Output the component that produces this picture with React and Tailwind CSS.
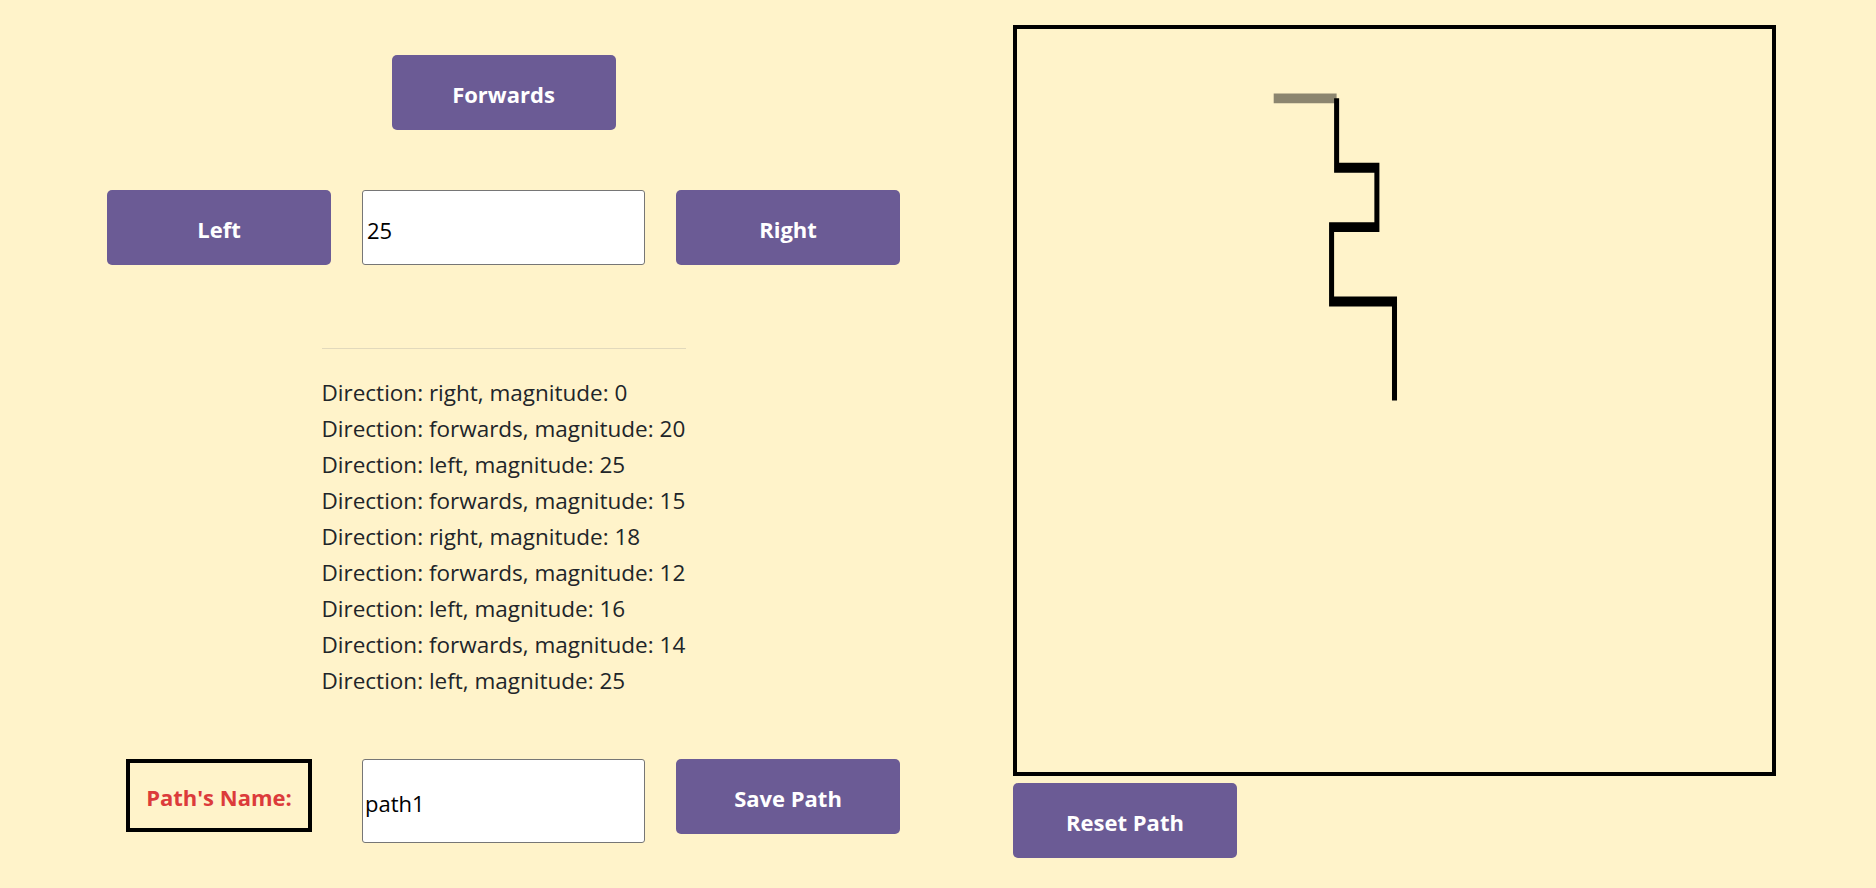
import React from "react";

const moves = [
  ["right", 0],
  ["forwards", 20],
  ["left", 25],
  ["forwards", 15],
  ["right", 18],
  ["forwards", 12],
  ["left", 16],
  ["forwards", 14],
  ["left", 25],
];

function Btn({ children }) {
  return (
    <button className="w-[224px] h-[75px] rounded-[5px] bg-[#6b5b95] text-white font-bold text-[22px] pt-[4px]">
      {children}
    </button>
  );
}

export default function App() {
  return (
    <div
      className="w-[1876px] h-[888px] bg-[#fff3ca] flex text-[#212529]"
      style={{ fontFamily: '"Open Sans", "Noto Sans", sans-serif' }}
    >
      <div className="w-[1007px] flex flex-col items-center">
        <div className="mt-[55px]">
          <Btn>Forwards</Btn>
        </div>
        <div className="mt-[60px] grid grid-cols-[224px_283px_224px] gap-x-[31px] items-center">
          <Btn>Left</Btn>
          <input
            defaultValue="25"
            className="w-[283px] h-[75px] bg-white border border-[#767676] rounded-[3px] px-[4px] pt-[5px] text-[22px] text-black outline-none"
          />
          <Btn>Right</Btn>
        </div>
        <div className="mt-[83px] w-[364px] border-t border-[#e2d9bc]" />
        <div className="mt-[26px] w-[364px] text-[22.5px] leading-[36px]">
          {moves.map(([d, m], i) => (
            <div key={i} className="whitespace-nowrap">
              Direction: {d}, magnitude: {m}
            </div>
          ))}
        </div>
        <div className="mt-[60px] grid grid-cols-[224px_283px_224px] gap-x-[31px] items-start">
          <div className="flex justify-center">
            <div className="w-[186px] h-[73px] border-4 border-black flex items-center justify-center pt-[3px] text-[#dc3b3b] font-bold text-[22px] whitespace-nowrap">
              Path's Name:
            </div>
          </div>
          <input
            defaultValue="path1"
            className="w-[283px] h-[84px] bg-white border border-[#767676] rounded-[3px] px-[2px] pt-[3px] text-[22px] text-black outline-none"
          />
          <Btn>Save Path</Btn>
        </div>
      </div>
      <div className="ml-[6px] pt-[25px] flex flex-col">
        <div className="w-[763px] h-[751px] border-4 border-black">
          <svg
            viewBox="0 0 300 150"
            preserveAspectRatio="none"
            className="w-full h-full block"
          >
            <polyline
              points="150,75 150,55 125,55 125,40 143,40 143,28 127,28 127,14"
              fill="none"
              stroke="#000"
              strokeWidth="2"
              strokeLinejoin="miter"
            />
            <line
              x1="127"
              y1="14"
              x2="102"
              y2="14"
              stroke="rgba(0,0,0,0.45)"
              strokeWidth="2"
            />
          </svg>
        </div>
        <div className="mt-[7px]">
          <Btn>Reset Path</Btn>
        </div>
      </div>
    </div>
  );
}
